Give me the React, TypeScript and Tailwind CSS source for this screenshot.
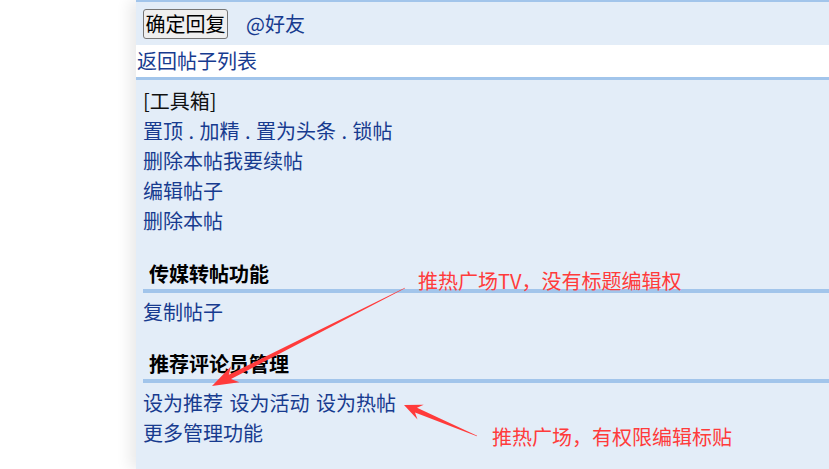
import React from "react";

const link = "text-[#173b8f]";

export default function App() {
  return (
    <div className="relative w-[829px] h-[469px] overflow-hidden bg-white font-['Noto_Sans_CJK_SC','Noto_Sans',sans-serif] text-[20px]">
      <div className="ml-[136px] h-full bg-[#e3edf8] shadow-[-6px_0_14px_rgba(0,0,0,0.09)] flex flex-col">
        <div className="h-[2px] bg-[#a2c5eb]" />
        <div className="h-[43px] flex items-center pl-[7px]">
          <button className="h-[30px] w-[85px] flex items-center justify-center border border-[#767676] rounded-[3px] bg-[#efefef] text-black text-[20px] leading-[26px]">
            确定回复
          </button>
          <span className={`ml-[18px] leading-[30px] ${link}`}>@好友</span>
        </div>
        <div className="h-[32px] bg-white flex items-center pl-[1px]">
          <span className={`leading-[30px] ${link}`}>返回帖子列表</span>
        </div>
        <div className="h-[3px] bg-[#a2c5eb]" />
        <div className="pl-[7px] pt-[6px] flex flex-col leading-[30px]">
          <div className="text-[#111]">[工具箱]</div>
          <div className={`[word-spacing:1px] ${link}`}>置顶 . 加精 . 置为头条 . 锁帖</div>
          <div className={link}>删除本帖我要续帖</div>
          <div className={link}>编辑帖子</div>
          <div className={link}>删除本帖</div>

          <div className="mt-[23px] pl-[6px] font-bold text-black leading-[30px]">传媒转帖功能</div>
          <div className="h-[4px] bg-[#a2c5eb]" />
          <div className={`pt-[4px] ${link}`}>复制帖子</div>

          <div className="mt-[22px] pl-[6px] font-bold text-black leading-[30px]">推荐评论员管理</div>
          <div className="h-[4px] bg-[#a2c5eb]" />
          <div className={`pt-[5px] [word-spacing:2px] ${link}`}>设为推荐 设为活动 设为热帖</div>
          <div className={link}>更多管理功能</div>
        </div>
      </div>

      <svg
        className="absolute inset-0 pointer-events-none"
        width="829"
        height="469"
        viewBox="0 0 829 469"
      >
        <polygon
          fill="#ff3b3b"
          points="405.1,288.3 231.0,379.1 239.3,382.2 212,386 231.1,366.2 228.8,374.7 404.9,287.7"
        />
        <polygon
          fill="#ff3b3b"
          points="477.1,435.7 417.0,407.8 423.7,404.7 404,405 417.5,419.4 415.0,412.4 476.9,436.3"
        />
      </svg>

      <div className="absolute left-[418px] top-[266px] leading-[30px] text-[20px] text-[#ff3b3b] whitespace-nowrap">
        推热广场TV，没有标题编辑权
      </div>
      <div className="absolute left-[492px] top-[422px] leading-[30px] text-[20px] text-[#ff3b3b] whitespace-nowrap">
        推热广场，有权限编辑标贴
      </div>
    </div>
  );
}
